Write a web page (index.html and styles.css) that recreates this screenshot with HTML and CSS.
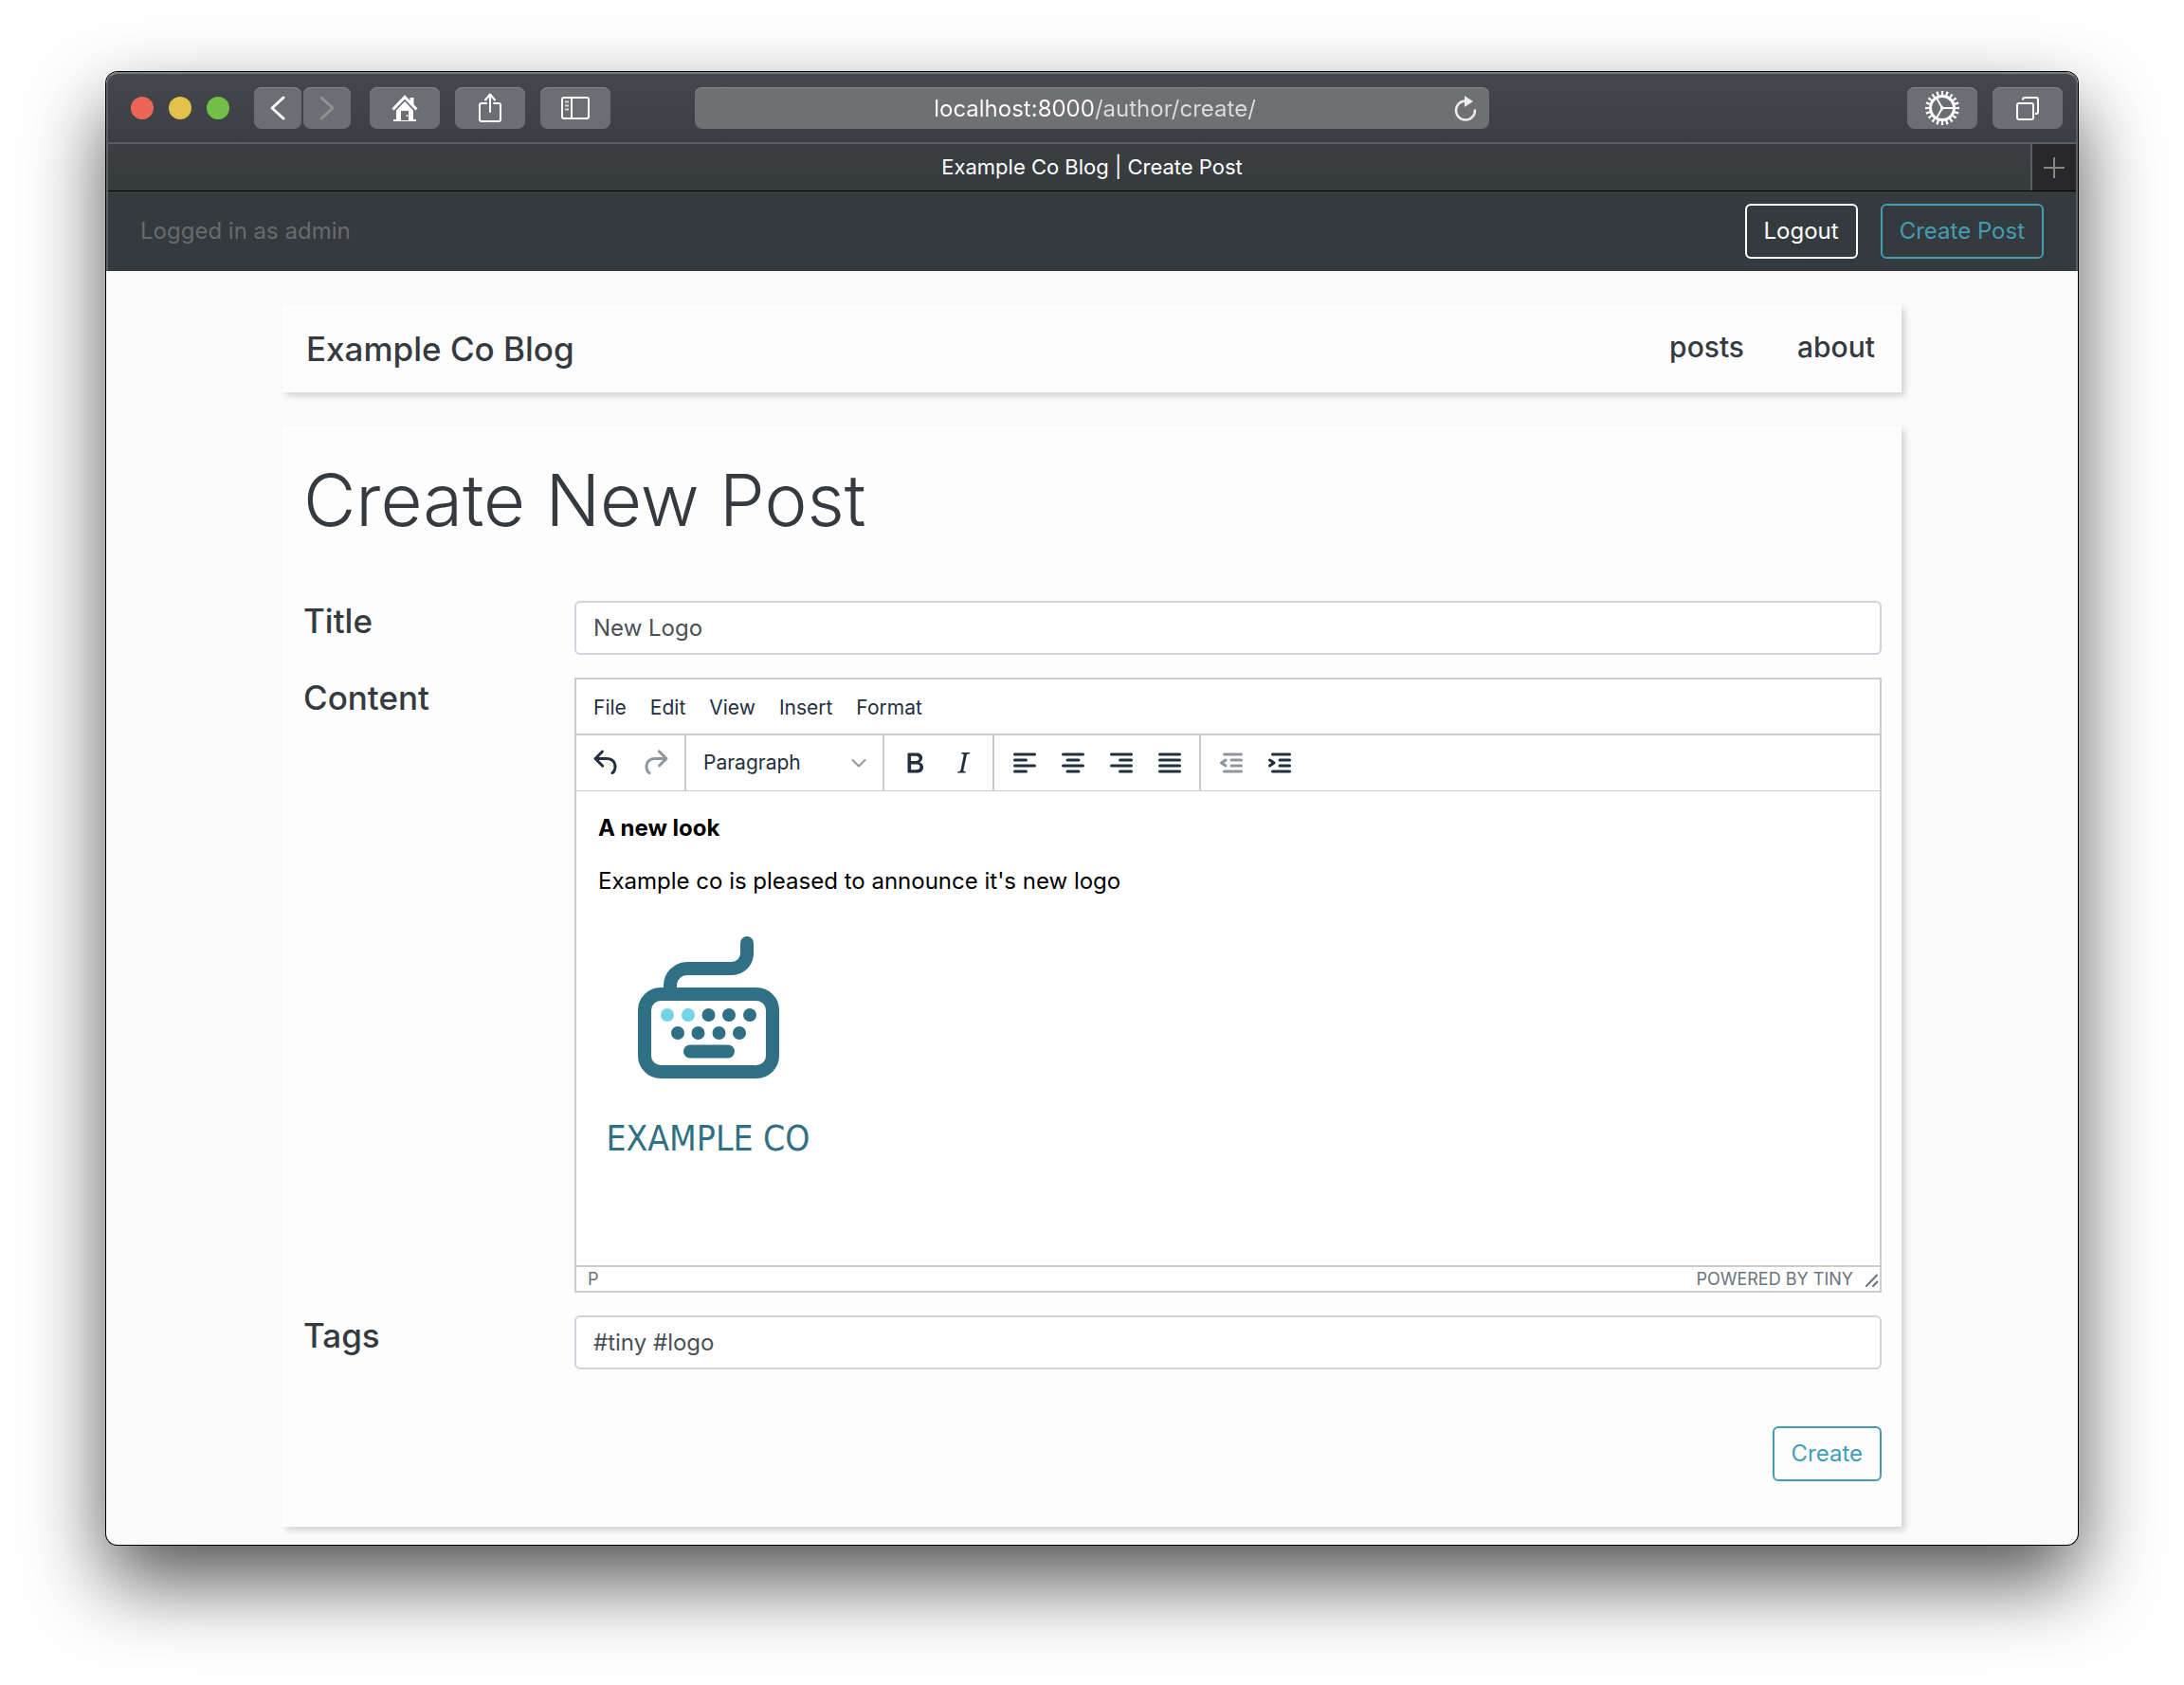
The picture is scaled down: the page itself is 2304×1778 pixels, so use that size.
FILE: index.html
```html
<!DOCTYPE html>
<html lang="en">
<head>
<meta charset="utf-8">
<title>Example Co Blog | Create Post</title>
<link rel="stylesheet" href="styles.css">
</head>
<body>
<div class="window">
  <div class="window-top">
    <div class="toolbar">
      <div class="toolbar-side">
        <div class="lights">
          <span class="light light-close"></span>
          <span class="light light-minimise"></span>
          <span class="light light-zoom"></span>
        </div>
        <div class="history">
          <button class="tool tool-small" aria-label="Back"><svg width="24" height="32" viewBox="0 0 24 32" fill="none" stroke="#fff" stroke-width="3" stroke-linecap="round" stroke-linejoin="round"><path d="M18 5 6 16l12 11"/></svg></button>
          <button class="tool tool-small" aria-label="Forward"><svg width="24" height="32" viewBox="0 0 24 32" fill="none" stroke="#8f9295" stroke-width="3" stroke-linecap="round" stroke-linejoin="round"><path d="M6 5l12 11L6 27"/></svg></button>
        </div>
        <button class="tool" aria-label="Home"><svg width="30" height="32" viewBox="0 0 30 32"><path d="M2.500 17.500 15 4.500l12.500 13" fill="none" stroke="#fff" stroke-width="3"/><path d="M20.500 5h4v8l-4-4z" fill="#fff"/><path fill="#fff" fill-rule="evenodd" d="M15 9l9 9.500V28h3v2H3v-2h3v-9.500zM11 19v10h8V19z"/><circle cx="17.500" cy="24" r="1" fill="#fff"/></svg></button>
        <button class="tool" aria-label="Share"><svg width="28" height="36" viewBox="0 0 28 36" fill="none" stroke="#fff" stroke-width="2" stroke-linecap="round" stroke-linejoin="round"><path d="M10 13H5a2 2 0 0 0-2 2v15a2 2 0 0 0 2 2h18a2 2 0 0 0 2-2V15a2 2 0 0 0-2-2h-5M14 22V4M9 9.500l5-6 5 6"/></svg></button>
        <button class="tool" aria-label="Sidebar"><svg width="32" height="28" viewBox="0 0 32 28" fill="none" stroke="#fff" stroke-width="2"><rect x="2" y="3" width="28" height="22" rx="2"/><path d="M12 3v22"/><path d="M5 7.500h4M5 11.500h4M5 15.500h4" stroke="#d5d7d8"/></svg></button>
      </div>
      <div class="address">
        <input class="address-input" type="text" aria-label="Address" value="localhost:8000/author/create/">
        <button class="reload" aria-label="Reload"><svg width="26" height="32" viewBox="0 0 26 32"><path d="M13 7.500a10 10 0 1 0 10 10" fill="none" stroke="#ececea" stroke-width="2.500" stroke-linecap="round"/><path d="M12 2l9 6-9 6z" fill="#ececea"/></svg></button>
      </div>
      <div class="toolbar-side toolbar-end">
        <button class="tool" aria-label="Settings"><svg width="38" height="38" viewBox="0 0 38 38" fill="none" stroke="#fff"><circle cx="19" cy="19" r="12.500" stroke-width="3"/><circle cx="19" cy="19" r="15.500" stroke-width="5" pathLength="40" stroke-dasharray="0.900 1.100" stroke-dashoffset="0.450"/><path d="M19 19h12M19 19l-6-10.500M19 19l-6 10.500" stroke-width="2"/><circle cx="19" cy="19" r="1.500" fill="#fff"/></svg></button>
        <button class="tool" aria-label="Show tabs"><svg width="28" height="28" viewBox="0 0 28 28" fill="none" stroke="#fff" stroke-width="2"><rect x="3" y="9" width="17" height="17" rx="2"/><path d="M9 5.500V5a2 2 0 0 1 2-2h12a2 2 0 0 1 2 2v13a2 2 0 0 1-2 2h-1"/></svg></button>
      </div>
    </div>
    <div class="tabs">
      <div class="tab">Example Co Blog | Create Post</div>
      <button class="tab-add" aria-label="New tab"><svg width="22" height="22" viewBox="0 0 22 22" stroke="#858786" stroke-width="2"><path d="M11 0v22M0 11h22"/></svg></button>
    </div>
    <nav class="userbar">
      <span class="user">Logged in as admin</span>
      <div class="userbar-actions">
        <button class="btn btn-light">Logout</button>
        <button class="btn btn-info">Create Post</button>
      </div>
    </nav>
  </div>

  <div class="page">
    <header class="card site-header">
      <a class="brand" href="#">Example Co Blog</a>
      <nav class="site-links">
        <a href="#">posts</a>
        <a href="#">about</a>
      </nav>
    </header>

    <main class="card post">
      <h1>Create New Post</h1>
      <form class="form">
        <label class="label" for="title">Title</label>
        <input class="field" id="title" type="text" value="New Logo">

        <span class="label" id="content-label">Content</span>
        <div class="editor">
          <div class="menubar">
            <button type="button">File</button>
            <button type="button">Edit</button>
            <button type="button">View</button>
            <button type="button">Insert</button>
            <button type="button">Format</button>
          </div>
          <div class="tools">
            <div class="group">
              <button type="button" class="icon" aria-label="Undo"><svg width="36" height="36" viewBox="0 0 24 24"><path d="M6.400 8H12c3.700 0 6.200 2 6.800 5.100.6 2.700-.4 5.600-2.300 6.800a1 1 0 0 1-1-1.800c1.100-.6 1.800-2.700 1.400-4.600-.5-2.100-2.100-3.500-4.900-3.500H6.400l3.300 3.300a1 1 0 1 1-1.400 1.400l-5-5a1 1 0 0 1 0-1.400l5-5a1 1 0 0 1 1.400 1.400L6.400 8Z"/></svg></button>
              <button type="button" class="icon" aria-label="Redo" disabled><svg width="36" height="36" viewBox="0 0 24 24"><path d="M17.600 10H12c-2.800 0-4.400 1.400-4.900 3.500-.4 2 .3 4 1.400 4.600a1 1 0 1 1-1 1.800c-2-1.200-2.900-4.100-2.300-6.800.6-3 3-5.100 6.800-5.100h5.600l-3.300-3.300a1 1 0 1 1 1.400-1.400l5 5a1 1 0 0 1 0 1.400l-5 5a1 1 0 0 1-1.400-1.400l3.300-3.300Z"/></svg></button>
            </div>
            <div class="group group-select">
              <select class="format" aria-label="Block format"><option>Paragraph</option></select>
              <svg class="chevron" width="16" height="16" viewBox="0 0 16 16" fill="none" stroke="#91969d" stroke-width="2" stroke-linecap="round" stroke-linejoin="round"><path d="M1.500 5 8 11.500 14.500 5"/></svg>
            </div>
            <div class="group">
              <button type="button" class="icon" aria-label="Bold"><svg width="36" height="36" viewBox="0 0 24 24"><path d="M7.800 19c-.3 0-.5 0-.6-.2l-.2-.5V5.700c0-.2 0-.4.200-.5l.6-.2h5c1.500 0 2.700.3 3.500 1 .7.600 1.100 1.400 1.100 2.500a3 3 0 0 1-.6 1.900c-.4.600-1 1-1.600 1.200.4.100.9.300 1.300.6s.8.700 1 1.200c.4.400.5 1 .5 1.600 0 1.300-.4 2.300-1.300 3-.8.700-2.100 1-3.800 1H7.800Zm5-8.300c.6 0 1.200-.1 1.600-.5.400-.3.600-.7.600-1.300 0-1.100-.8-1.700-2.300-1.700H9.300v3.500h3.400Zm.5 6c.7 0 1.300-.1 1.700-.4.400-.4.600-.9.600-1.500s-.2-1-.7-1.400c-.4-.3-1-.4-2-.4H9.400v3.800h4Z"/></svg></button>
              <button type="button" class="icon" aria-label="Italic"><svg width="36" height="36" viewBox="0 0 24 24"><path d="m16.700 4.700-.1.900h-.3c-.6 0-1 0-1.400.3-.3.300-.4.600-.5 1.100l-2.100 9.800v.6c0 .5.400.8 1.400.8h.2l-.2.800H8l.2-.8h.2c1.100 0 1.800-.5 2-1.500l2-9.800.1-.5c0-.6-.4-.8-1.400-.8h-.3l.2-.9h5.800Z"/></svg></button>
            </div>
            <div class="group">
              <button type="button" class="icon" aria-label="Align left"><svg width="36" height="36" viewBox="0 0 24 24"><path d="M5 5h14a1 1 0 0 1 0 2H5a1 1 0 1 1 0-2Zm0 4h8a1 1 0 0 1 0 2H5a1 1 0 1 1 0-2Zm0 8h8a1 1 0 0 1 0 2H5a1 1 0 0 1 0-2Zm0-4h14a1 1 0 0 1 0 2H5a1 1 0 0 1 0-2Z"/></svg></button>
              <button type="button" class="icon" aria-label="Align centre"><svg width="36" height="36" viewBox="0 0 24 24"><path d="M5 5h14a1 1 0 0 1 0 2H5a1 1 0 1 1 0-2Zm3 4h8a1 1 0 0 1 0 2H8a1 1 0 1 1 0-2Zm0 8h8a1 1 0 0 1 0 2H8a1 1 0 0 1 0-2Zm-3-4h14a1 1 0 0 1 0 2H5a1 1 0 0 1 0-2Z"/></svg></button>
              <button type="button" class="icon" aria-label="Align right"><svg width="36" height="36" viewBox="0 0 24 24"><path d="M5 5h14a1 1 0 0 1 0 2H5a1 1 0 1 1 0-2Zm6 4h8a1 1 0 0 1 0 2h-8a1 1 0 0 1 0-2Zm0 8h8a1 1 0 0 1 0 2h-8a1 1 0 0 1 0-2Zm-6-4h14a1 1 0 0 1 0 2H5a1 1 0 0 1 0-2Z"/></svg></button>
              <button type="button" class="icon" aria-label="Justify"><svg width="36" height="36" viewBox="0 0 24 24"><path d="M5 5h14a1 1 0 0 1 0 2H5a1 1 0 1 1 0-2Zm0 4h14a1 1 0 0 1 0 2H5a1 1 0 1 1 0-2Zm0 4h14a1 1 0 0 1 0 2H5a1 1 0 0 1 0-2Zm0 4h14a1 1 0 0 1 0 2H5a1 1 0 0 1 0-2Z"/></svg></button>
            </div>
            <div class="group">
              <button type="button" class="icon" aria-label="Decrease indent" disabled><svg width="36" height="36" viewBox="0 0 24 24"><path d="M7 5h12a1 1 0 0 1 0 2H7a1 1 0 1 1 0-2Zm5 4h7a1 1 0 0 1 0 2h-7a1 1 0 0 1 0-2Zm0 4h7a1 1 0 0 1 0 2h-7a1 1 0 0 1 0-2Zm-5 4h12a1 1 0 0 1 0 2H7a1 1 0 0 1 0-2Zm1.600-3.800a1 1 0 0 1-1.200 1.600l-3-2a1 1 0 0 1 0-1.600l3-2a1 1 0 0 1 1.200 1.600L6.800 12l1.800 1.200Z"/></svg></button>
              <button type="button" class="icon" aria-label="Increase indent"><svg width="36" height="36" viewBox="0 0 24 24"><path d="M7 5h12a1 1 0 0 1 0 2H7a1 1 0 1 1 0-2Zm5 4h7a1 1 0 0 1 0 2h-7a1 1 0 0 1 0-2Zm0 4h7a1 1 0 0 1 0 2h-7a1 1 0 0 1 0-2Zm-5 4h12a1 1 0 0 1 0 2H7a1 1 0 0 1 0-2Zm-2.600-3.800L6.200 12l-1.800-1.200a1 1 0 0 1 1.200-1.600l3 2a1 1 0 0 1 0 1.600l-3 2a1 1 0 1 1-1.200-1.600Z"/></svg></button>
            </div>
          </div>
          <div class="document" contenteditable="true" role="textbox" aria-multiline="true" aria-labelledby="content-label">
            <p><strong>A new look</strong></p>
            <p>Example co is pleased to announce it's new logo</p>
            <svg class="logo" width="232" height="266" viewBox="0 0 232 266" role="img" aria-label="Example Co logo">
              <g fill="none" stroke="#2f7084" stroke-width="14">
                <path d="M76 74v-4a18 18 0 0 1 18-18h47a16 16 0 0 0 16-16V25" stroke-linecap="round"/>
                <rect x="49" y="79" width="135" height="82" rx="17"/>
              </g>
              <g fill="#72d5e7"><circle cx="73" cy="101" r="7"/><circle cx="95" cy="101" r="7"/></g>
              <g fill="#2f7084">
                <circle cx="116.500" cy="101" r="7"/><circle cx="138" cy="101" r="7"/><circle cx="160" cy="101" r="7"/>
                <circle cx="84" cy="120" r="7"/><circle cx="105.500" cy="120" r="7"/><circle cx="127.500" cy="120" r="7"/><circle cx="149" cy="120" r="7"/>
                <rect x="90" y="132.500" width="54" height="14" rx="7"/>
                <text class="logo-text" x="116" y="244" text-anchor="middle">EXAMPLE CO</text>
              </g>
            </svg>
          </div>
          <div class="status">
            <span>P</span>
            <a href="#">POWERED BY TINY</a>
            <svg width="18" height="18" viewBox="0 0 18 18" stroke="#6b737e" stroke-width="2" stroke-linecap="round"><path d="M4 16 15 4.500M11 16l4.500-4.500"/></svg>
          </div>
        </div>

        <label class="label" for="tags">Tags</label>
        <input class="field" id="tags" type="text" value="#tiny #logo">

        <button type="submit" class="btn btn-info create">Create</button>
      </form>
    </main>
  </div>
</div>
</body>
</html>
```

FILE: styles.css
```css
* {
  box-sizing: border-box;
}

body {
  margin: 0;
  padding: 76px 112px 148px;
  background: #fff;
  color: #343a40;
  font: 24px/32px Inter, "Liberation Sans", sans-serif;
}

button,
input,
select {
  margin: 0;
  padding: 0;
  border: 0;
  background: none;
  color: inherit;
  font: inherit;
}

svg {
  display: block;
}

a {
  color: inherit;
  text-decoration: none;
}

/* Browser window */

.window {
  overflow: hidden;
  border-radius: 12px;
  background: #fafafa;
  box-shadow: 0 0 0 1px #000, 0 38px 84px rgba(0, 0, 0, 0.68);
}

.window-top {
  border: 2px solid #5d6164;
  border-top-color: #767b7b;
  border-bottom: 0;
  border-radius: 12px 12px 0 0;
  background: linear-gradient(#44474c, #353a3d 124px);
}

.toolbar {
  display: grid;
  grid-template-columns: 1fr minmax(0, 838px) 1fr;
  align-items: center;
  height: 74px;
  padding: 0 14px 0 24px;
  border-bottom: 2px solid #5a5d61;
}

.toolbar-side {
  display: flex;
  gap: 16px;
}

.toolbar-end {
  justify-content: flex-end;
}

.lights {
  display: flex;
  align-items: center;
  gap: 16px;
  margin-right: 10px;
}

.light {
  width: 24px;
  height: 24px;
  border-radius: 50%;
}

.light-close {
  background: #ed6559;
}

.light-minimise {
  background: #e1c04c;
}

.light-zoom {
  background: #72be47;
}

.history {
  display: flex;
  gap: 2px;
  margin-right: 4px;
}

.tool {
  display: flex;
  align-items: center;
  justify-content: center;
  width: 74px;
  height: 44px;
  border-radius: 8px;
  background: #6b6e72;
  box-shadow: inset 0 1px #85888b;
}

.tool-small {
  width: 50px;
}

.address {
  display: flex;
  align-items: center;
  height: 44px;
  margin-left: -5px;
  margin-right: 5px;
  padding: 2px 12px 0 44px;
  border-radius: 8px;
  background: #6e7073;
  box-shadow: inset 0 1px #85888b;
}

.address-input {
  flex: 1;
  min-width: 0;
  background: linear-gradient(90deg, #fff 50%, #dcdddd 50%);
  background-clip: text;
  color: transparent;
  text-align: center;
}

.tabs {
  display: flex;
  height: 50px;
  border-bottom: 1px solid #000;
}

.tab {
  flex: 1;
  padding-left: 48px;
  color: #fff;
  font-size: 22px;
  line-height: 48px;
  text-align: center;
}

.tab-add {
  display: flex;
  align-items: center;
  justify-content: center;
  width: 48px;
  border-left: 2px solid #5a5d61;
  background: #28282b;
}

.userbar {
  display: flex;
  align-items: center;
  justify-content: space-between;
  height: 84px;
  padding: 0 34px;
  background: #353a3e;
}

.user {
  color: #686b6e;
}

.userbar-actions {
  display: flex;
  gap: 24px;
}

.btn {
  height: 58px;
  padding: 0 18px;
  border: 2px solid;
  border-radius: 6px;
}

.btn-light {
  color: #fff;
}

.btn-info {
  color: #439eb3;
}

/* Blog page */

.page {
  display: flex;
  flex-direction: column;
  gap: 36px;
  max-width: 1708px;
  margin: 0 auto;
  padding: 36px 0 19px;
}

.card {
  background: #fdfdfd;
  box-shadow: 4px 4px 6px rgba(0, 0, 0, 0.15);
}

.site-header {
  display: flex;
  align-items: center;
  justify-content: space-between;
  height: 92px;
  padding: 0 28px 0 25px;
  font-weight: 500;
}

.brand {
  font-size: 35px;
}

.site-links {
  display: flex;
  gap: 56px;
  padding-bottom: 4px;
  font-size: 30px;
}

.post {
  padding: 27px 21px 48px 22px;
}

h1 {
  margin: 0 0 57px;
  font-size: 76px;
  font-weight: 300;
  line-height: 100px;
}

.form {
  display: grid;
  grid-template-columns: 262px minmax(0, 1fr);
  gap: 24px;
  align-items: start;
}

.label {
  font-size: 35px;
  font-weight: 500;
  line-height: 42px;
}

.field {
  width: 100%;
  height: 57px;
  padding: 0 18px;
  border: 2px solid #ced4da;
  border-radius: 6px;
  background: #fff;
  color: #495057;
}

.create {
  grid-column: 2;
  justify-self: end;
  margin-top: 36px;
}

/* Rich text editor */

.editor {
  border: 2px solid #ccc;
  background: #fff;
  color: #222f3e;
}

.menubar {
  display: flex;
  gap: 25px;
  height: 59px;
  padding: 2px 18px 0;
  border-bottom: 2px solid #ccc;
  font-size: 21px;
}

.tools {
  display: flex;
  height: 59px;
  border-bottom: 1px solid #ccc;
}

.group {
  display: flex;
  align-items: center;
  padding: 0 6px;
}

.group + .group {
  border-left: 2px solid #ccc;
}

.group-select {
  width: 209px;
  padding: 0 17px 0 18px;
}

.icon {
  display: flex;
  justify-content: center;
  width: 51px;
  fill: #222f3e;
}

.icon:disabled {
  fill: #91969d;
}

.format {
  flex: 1;
  min-width: 0;
  appearance: none;
  font-size: 21px;
}

.document {
  min-height: 500px;
  padding: 23px 23px 0;
  color: #000;
}

.document p {
  margin: 0 0 24px;
}

.logo-text {
  font: 37px "DejaVu Sans Condensed", sans-serif;
}

.status {
  display: flex;
  align-items: center;
  height: 27px;
  padding-left: 12px;
  border-top: 2px solid #ccc;
  color: #6b737e;
  font-size: 18px;
  line-height: 24px;
}

.status a {
  margin-left: auto;
  margin-right: 10px;
}
```
